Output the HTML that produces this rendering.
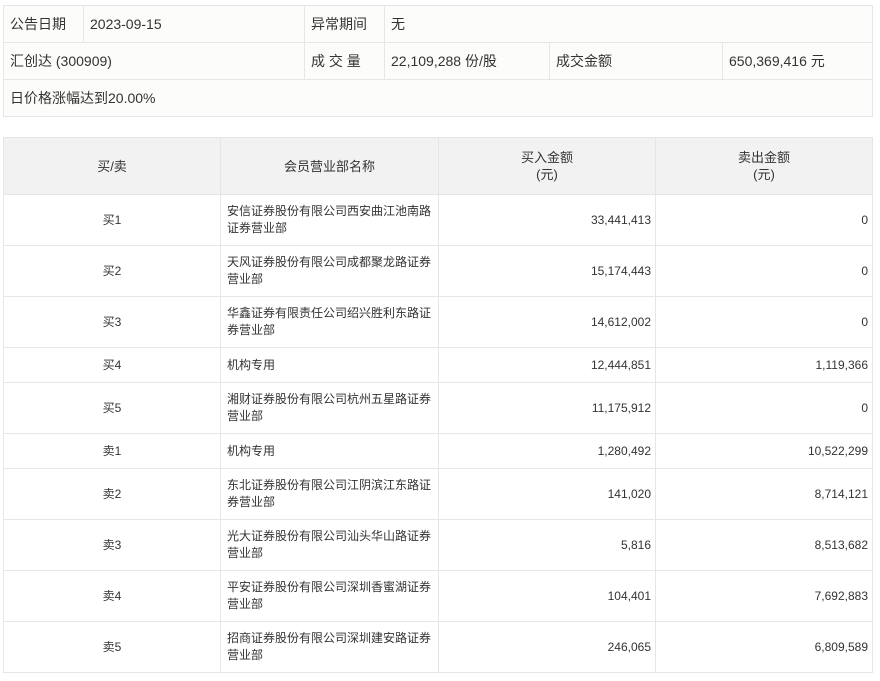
<!DOCTYPE html>
<html><head><meta charset="utf-8"><style>
body{margin:0;background:#fff;font-family:"Liberation Sans","Noto Sans CJK SC",sans-serif;color:#333;width:880px;height:681px;overflow:hidden;position:relative}
table{border-collapse:collapse;position:absolute;left:3px;table-layout:fixed}
td,th{border:1px solid #e6e6e6;padding:0 6px;font-weight:normal}
.t1{top:5px;width:869px;background:#fcfcfa;font-size:14px}
.t1 td{height:36px}
.t2{top:137px;width:869px;font-size:12px;line-height:17px}
.t2 th{background:#f2f2f2;height:56px;text-align:center;font-size:13px}
.t2 td{height:50px}
.t2 td.c{text-align:center}
.t2 td.r{text-align:right;padding-right:4px}
.t2 tr.s td{height:34px}
</style></head><body>
<table class="t1">
<colgroup><col style="width:80px"><col style="width:221px"><col style="width:80px"><col style="width:165px"><col style="width:173px"><col style="width:150px"></colgroup>
<tr><td>公告日期</td><td>2023-09-15</td><td>异常期间</td><td colspan="3">无</td></tr>
<tr><td colspan="2">汇创达 (300909)</td><td>成 交 量</td><td>22,109,288 份/股</td><td>成交金额</td><td>650,369,416 元</td></tr>
<tr><td colspan="6">日价格涨幅达到20.00%</td></tr>
</table>
<table class="t2">
<colgroup><col style="width:217px"><col style="width:218px"><col style="width:217px"><col style="width:217px"></colgroup>
<tr><th>买/卖</th><th>会员营业部名称</th><th>买入金额<br>(元)</th><th>卖出金额<br>(元)</th></tr>
<tr><td class="c">买1</td><td>安信证券股份有限公司西安曲江池南路证券营业部</td><td class="r">33,441,413</td><td class="r">0</td></tr>
<tr><td class="c">买2</td><td>天风证券股份有限公司成都聚龙路证券营业部</td><td class="r">15,174,443</td><td class="r">0</td></tr>
<tr><td class="c">买3</td><td>华鑫证券有限责任公司绍兴胜利东路证券营业部</td><td class="r">14,612,002</td><td class="r">0</td></tr>
<tr class="s"><td class="c">买4</td><td>机构专用</td><td class="r">12,444,851</td><td class="r">1,119,366</td></tr>
<tr><td class="c">买5</td><td>湘财证券股份有限公司杭州五星路证券营业部</td><td class="r">11,175,912</td><td class="r">0</td></tr>
<tr class="s"><td class="c">卖1</td><td>机构专用</td><td class="r">1,280,492</td><td class="r">10,522,299</td></tr>
<tr><td class="c">卖2</td><td>东北证券股份有限公司江阴滨江东路证券营业部</td><td class="r">141,020</td><td class="r">8,714,121</td></tr>
<tr><td class="c">卖3</td><td>光大证券股份有限公司汕头华山路证券营业部</td><td class="r">5,816</td><td class="r">8,513,682</td></tr>
<tr><td class="c">卖4</td><td>平安证券股份有限公司深圳香蜜湖证券营业部</td><td class="r">104,401</td><td class="r">7,692,883</td></tr>
<tr><td class="c">卖5</td><td>招商证券股份有限公司深圳建安路证券营业部</td><td class="r">246,065</td><td class="r">6,809,589</td></tr>
</table>
</body></html>
